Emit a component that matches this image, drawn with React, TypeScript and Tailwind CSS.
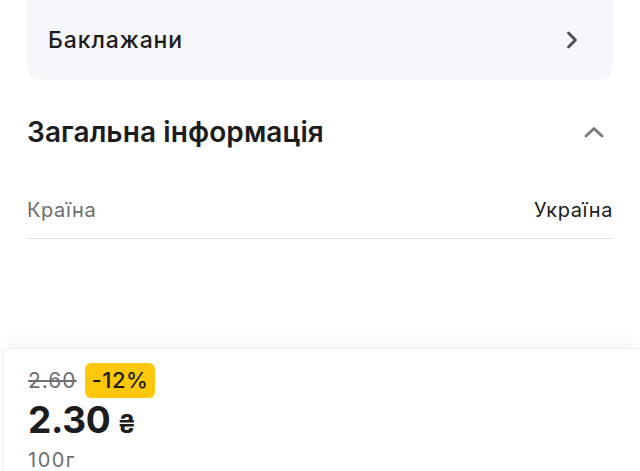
import React from 'react';

const font = { fontFamily: 'Inter, "Noto Sans", sans-serif' };

function ChevronRight() {
  return (
    <svg width="14" height="20" viewBox="0 0 14 20" fill="none">
      <path d="M3.5 3l7 7-7 7" stroke="#4a4a4f" strokeWidth="2.8" strokeLinecap="round" strokeLinejoin="round" />
    </svg>
  );
}

function ChevronUp() {
  return (
    <svg width="20" height="14" viewBox="0 0 20 14" fill="none">
      <path d="M2 11l8-7.5 8 7.5" stroke="#7a7a7e" strokeWidth="2.8" strokeLinecap="round" strokeLinejoin="round" />
    </svg>
  );
}

export default function App() {
  return (
    <div className="relative h-[471px] w-[640px] overflow-hidden bg-white text-[#1c1c1e]" style={font}>
      <div className="px-[27px]">
        <div className="flex h-[80px] items-center justify-between rounded-b-[14px] bg-[#f6f7fb] pl-[21px] pr-[34px]">
          <span className="text-[23px] font-medium tracking-[0.9px]">Баклажани</span>
          <ChevronRight />
        </div>

        <div className="mt-[35px] flex h-[34px] items-center justify-between">
          <span className="text-[28px] font-semibold tracking-[0.1px]">Загальна інформація</span>
          <span className="mr-[9px]">
            <ChevronUp />
          </span>
        </div>

        <div className="mt-[47px] flex h-[28px] items-center justify-between">
          <span className="text-[20px] tracking-[0.6px] text-[#6e6e72]">Країна</span>
          <span className="text-[20px] tracking-[0.6px] text-[#1c1c1e]">Україна</span>
        </div>
        <div className="mt-[14px] h-px bg-[#e4e4e6]" />
      </div>

      <div className="absolute bottom-0 left-[2px] right-0 h-[123px] rounded-tl-[6px] border-l border-t border-[#ececec] bg-white pl-[25px] pt-[14px] shadow-[0_-6px_18px_rgba(0,0,0,0.04)]">
        <div className="flex items-center gap-[8px]">
          <span className="text-[21px] tracking-[1px] text-[#6e6e72] line-through decoration-[#6e6e72]">2.60</span>
          <span className="rounded-[6px] bg-[#fcc809] px-[7px] py-[1px] text-[22px] font-medium tracking-[0.5px] text-[#1c1c1e]">-12%</span>
        </div>
        <div className="mt-[3px] flex items-baseline gap-[7px] leading-none">
          <span className="text-[37px] font-bold tracking-[-0.3px]">2.30</span>
          <span className="text-[25px] font-bold">₴</span>
        </div>
        <div className="mt-[12px] text-[20px] leading-none tracking-[1.5px] text-[#6e6e72]">100г</div>
      </div>
    </div>
  );
}
